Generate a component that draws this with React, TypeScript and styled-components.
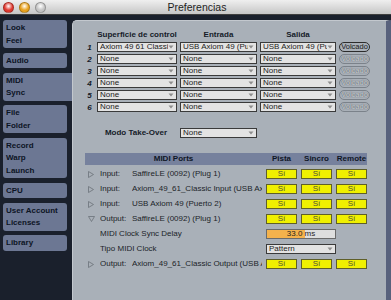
import React from "react";
import styled, { createGlobalStyle } from "styled-components";

const GlobalStyle = createGlobalStyle`
  html, body {
    margin: 0;
    padding: 0;
    background: #1a202c;
  }
  body {
    font-family: "Liberation Sans", Arial, sans-serif;
  }
`;

const Window = styled.div`
  width: 391px;
  height: 300px;
  display: flex;
  flex-direction: column;
  overflow: hidden;
  background: #1a202c;
`;

const TitleBar = styled.div`
  height: 14px;
  flex: none;
  display: grid;
  grid-template-columns: 1fr auto 1fr;
  align-items: center;
  padding-left: 3px;
  background: linear-gradient(#efefef, #c6c6c6);
  border-bottom: 1px solid #3e3e3e;
`;

const Lights = styled.div`
  display: flex;
  gap: 5px;
`;

const Light = styled.span<{ $tone: string }>`
  width: 11px;
  height: 11px;
  border-radius: 50%;
  box-sizing: border-box;
  border: 1px solid rgba(0, 0, 0, 0.25);
  background: radial-gradient(circle at 50% 35%, #ffffff 0%, ${(p) => p.$tone} 55%);
`;

const Title = styled.div`
  font-size: 10.5px;
  color: #1e1e1e;
  line-height: 14px;
`;

const Body = styled.div`
  flex: 1;
  display: flex;
  padding-top: 5px;
  min-height: 0;
`;

const Sidebar = styled.nav`
  width: 72px;
  flex: none;
  display: flex;
  flex-direction: column;
  gap: 4.5px;
  padding-left: 3px;
  box-sizing: border-box;
`;

const Tab = styled.div<{ $active?: boolean }>`
  background: #6c7793;
  color: #0c1424;
  font-size: 8px;
  font-weight: bold;
  line-height: 12.5px;
  padding: 2px 3px 1px;
  margin-right: ${(p) => (p.$active ? "0" : "5px")};
  border-radius: ${(p) => (p.$active ? "3px 0 0 3px" : "3px")};
`;

const Panel = styled.section`
  flex: 1;
  background: #a9b0b8;
  border-top: 1px solid #c3c8ce;
  border-left: 1px solid #c3c8ce;
  border-right: 5px solid #58617c;
  border-radius: 5px 0 0 0;
  padding: 9px 0 0 12px;
  color: #202428;
  font-size: 8px;
`;

const SurfaceGrid = styled.div`
  display: grid;
  grid-template-columns: 9px 80px 77px 76px 31px;
  grid-auto-rows: 10px;
  column-gap: 3px;
  row-gap: 2px;
  align-items: center;
`;

const ColHead = styled.div`
  font-weight: bold;
  color: #151b28;
  text-align: center;
  line-height: 10px;
`;

const RowNum = styled.div`
  font-weight: bold;
  font-style: italic;
  color: #151b28;
  text-align: center;
`;

const SelectBox = styled.div`
  height: 10px;
  box-sizing: border-box;
  border: 1px solid #3a3a3a;
  background: #e3e3e3;
  display: flex;
  align-items: center;
  padding: 0 2px 0 2px;
  overflow: hidden;
  color: #1c1c1c;
`;

const SelectText = styled.span`
  flex: 1;
  white-space: nowrap;
  overflow: hidden;
  line-height: 8px;
`;

const Volcado = styled.div<{ $enabled?: boolean }>`
  height: 10px;
  box-sizing: border-box;
  border-radius: 5px;
  border: 1px solid ${(p) => (p.$enabled ? "#2c2c2c" : "#7b828a")};
  color: ${(p) => (p.$enabled ? "#1a1a1a" : "#cdd1d5")};
  text-shadow: ${(p) =>
    p.$enabled ? "none" : "0 0 1px #5d646c, 0 0 1px #5d646c"};
  font-size: 7.5px;
  line-height: 8px;
  text-align: center;
  overflow: hidden;
  white-space: nowrap;
`;

const TakeOverRow = styled.div`
  display: grid;
  grid-template-columns: 9px 80px 77px;
  column-gap: 3px;
  height: 11px;
  align-items: center;
  margin-top: 15px;
`;

const TakeOverLabel = styled.div`
  grid-column: 1 / 3;
  text-align: right;
  padding-right: 10px;
  font-weight: bold;
  color: #151b28;
`;

const portCols = "11px 28px 130px 31px 31px 31px";

const PortsHead = styled.div`
  display: grid;
  grid-template-columns: ${portCols};
  column-gap: 4px;
  width: 282px;
  height: 12px;
  margin-top: 15px;
  background: #76819d;
  color: #0f1626;
  font-weight: bold;
  line-height: 12px;
`;

const HeadCell = styled.div<{ $span?: string }>`
  grid-column: ${(p) => p.$span ?? "auto"};
  text-align: center;
  white-space: nowrap;
`;

const PortsGrid = styled.div`
  display: grid;
  grid-template-columns: ${portCols};
  column-gap: 4px;
  grid-auto-rows: 10px;
  row-gap: 5px;
  margin-top: 4px;
  align-items: center;
  white-space: nowrap;
`;

const Toggle = styled.div`
  display: flex;
  align-items: center;
  padding-left: 3px;
`;

const Cell = styled.div<{ $span?: string }>`
  grid-column: ${(p) => p.$span ?? "auto"};
  overflow: hidden;
  line-height: 10px;
`;

const SiBox = styled.div`
  height: 10px;
  box-sizing: border-box;
  background: #f0f000;
  border: 1px solid #5f5f28;
  color: #4e4e3a;
  text-align: center;
  line-height: 8px;
`;

const DelayField = styled.div`
  grid-column: 4 / 7;
  width: 70px;
  height: 10px;
  box-sizing: border-box;
  border: 1px solid #6a6a6a;
  background: #dedede;
  position: relative;
  overflow: hidden;
`;

const DelayFill = styled.div`
  position: absolute;
  left: 0;
  top: 0;
  bottom: 0;
  background: #f4b24c;
`;

const DelayText = styled.div`
  position: relative;
  text-align: center;
  line-height: 8px;
  color: #1e1e1e;
`;

const WideSelect = styled(SelectBox)`
  grid-column: 4 / 7;
  width: 70px;
`;

const Arrow = () => (
  <svg width="6" height="4" viewBox="0 0 6 4">
    <path d="M0.5 0.5 L5.5 0.5 L3 3.5 Z" fill="#8d8d8d" />
  </svg>
);

const Tri = ({ open }: { open?: boolean }) =>
  open ? (
    <svg width="7" height="6" viewBox="0 0 7 6">
      <path d="M0.5 0.5 L6.5 0.5 L3.5 5.5 Z" fill="none" stroke="#6b7178" strokeWidth="0.8" />
    </svg>
  ) : (
    <svg width="6" height="7" viewBox="0 0 6 7">
      <path d="M0.5 0.5 L5.5 3.5 L0.5 6.5 Z" fill="none" stroke="#6b7178" strokeWidth="0.8" />
    </svg>
  );

const Select = ({ value }: { value: string }) => (
  <SelectBox>
    <SelectText>{value}</SelectText>
    <Arrow />
  </SelectBox>
);

const tabs = [
  ["Look", "Feel"],
  ["Audio"],
  ["MIDI", "Sync"],
  ["File", "Folder"],
  ["Record", "Warp", "Launch"],
  ["CPU"],
  ["User Account", "Licenses"],
  ["Library"],
];

const surfaces = [
  ["Axiom 49 61 Classic", "USB Axiom 49 (Puerto 1)", "USB Axiom 49 (Puerto 1)"],
  ["None", "None", "None"],
  ["None", "None", "None"],
  ["None", "None", "None"],
  ["None", "None", "None"],
  ["None", "None", "None"],
];

const ports = [
  { dir: "Input:", name: "SaffireLE (0092) (Plug 1)" },
  { dir: "Input:", name: "Axiom_49_61_Classic Input (USB Axiom 49)" },
  { dir: "Input:", name: "USB Axiom 49 (Puerto 2)" },
];

const Si = () => (
  <>
    <SiBox>Sí</SiBox>
    <SiBox>Sí</SiBox>
    <SiBox>Sí</SiBox>
  </>
);

export default function App() {
  return (
    <>
      <GlobalStyle />
      <Window>
        <TitleBar>
          <Lights>
            <Light $tone="#e0392f" />
            <Light $tone="#e9a21e" />
            <Light $tone="#c4c4c4" />
          </Lights>
          <Title>Preferencias</Title>
          <div />
        </TitleBar>
        <Body>
          <Sidebar>
            {tabs.map((lines) => (
              <Tab key={lines[0]} $active={lines[0] === "MIDI"}>
                {lines.map((l) => (
                  <div key={l}>{l}</div>
                ))}
              </Tab>
            ))}
          </Sidebar>
          <Panel>
            <SurfaceGrid>
              <div />
              <ColHead>Superficie de control</ColHead>
              <ColHead>Entrada</ColHead>
              <ColHead>Salida</ColHead>
              <div />
              {surfaces.map((row, i) => (
                <React.Fragment key={i}>
                  <RowNum>{i + 1}</RowNum>
                  <Select value={row[0]} />
                  <Select value={row[1]} />
                  <Select value={row[2]} />
                  <Volcado $enabled={i === 0}>Volcado</Volcado>
                </React.Fragment>
              ))}
            </SurfaceGrid>

            <TakeOverRow>
              <TakeOverLabel>Modo Take-Over</TakeOverLabel>
              <Select value="None" />
            </TakeOverRow>

            <PortsHead>
              <HeadCell $span="1 / 4">MIDI Ports</HeadCell>
              <HeadCell>Pista</HeadCell>
              <HeadCell>Sincro</HeadCell>
              <HeadCell>Remote</HeadCell>
            </PortsHead>

            <PortsGrid>
              {ports.map((p) => (
                <React.Fragment key={p.name}>
                  <Toggle>
                    <Tri />
                  </Toggle>
                  <Cell>{p.dir}</Cell>
                  <Cell>{p.name}</Cell>
                  <Si />
                </React.Fragment>
              ))}
              <Toggle>
                <Tri open />
              </Toggle>
              <Cell>Output:</Cell>
              <Cell>SaffireLE (0092) (Plug 1)</Cell>
              <Si />

              <div />
              <Cell $span="2 / 4">MIDI Clock Sync Delay</Cell>
              <DelayField>
                <DelayFill style={{ width: "56%" }} />
                <DelayText>33.0 ms</DelayText>
              </DelayField>

              <div />
              <Cell $span="2 / 4">Tipo MIDI Clock</Cell>
              <WideSelect>
                <SelectText>Pattern</SelectText>
                <Arrow />
              </WideSelect>

              <Toggle>
                <Tri />
              </Toggle>
              <Cell>Output:</Cell>
              <Cell>Axiom_49_61_Classic Output (USB Axiom 49)</Cell>
              <Si />
            </PortsGrid>
          </Panel>
        </Body>
      </Window>
    </>
  );
}
